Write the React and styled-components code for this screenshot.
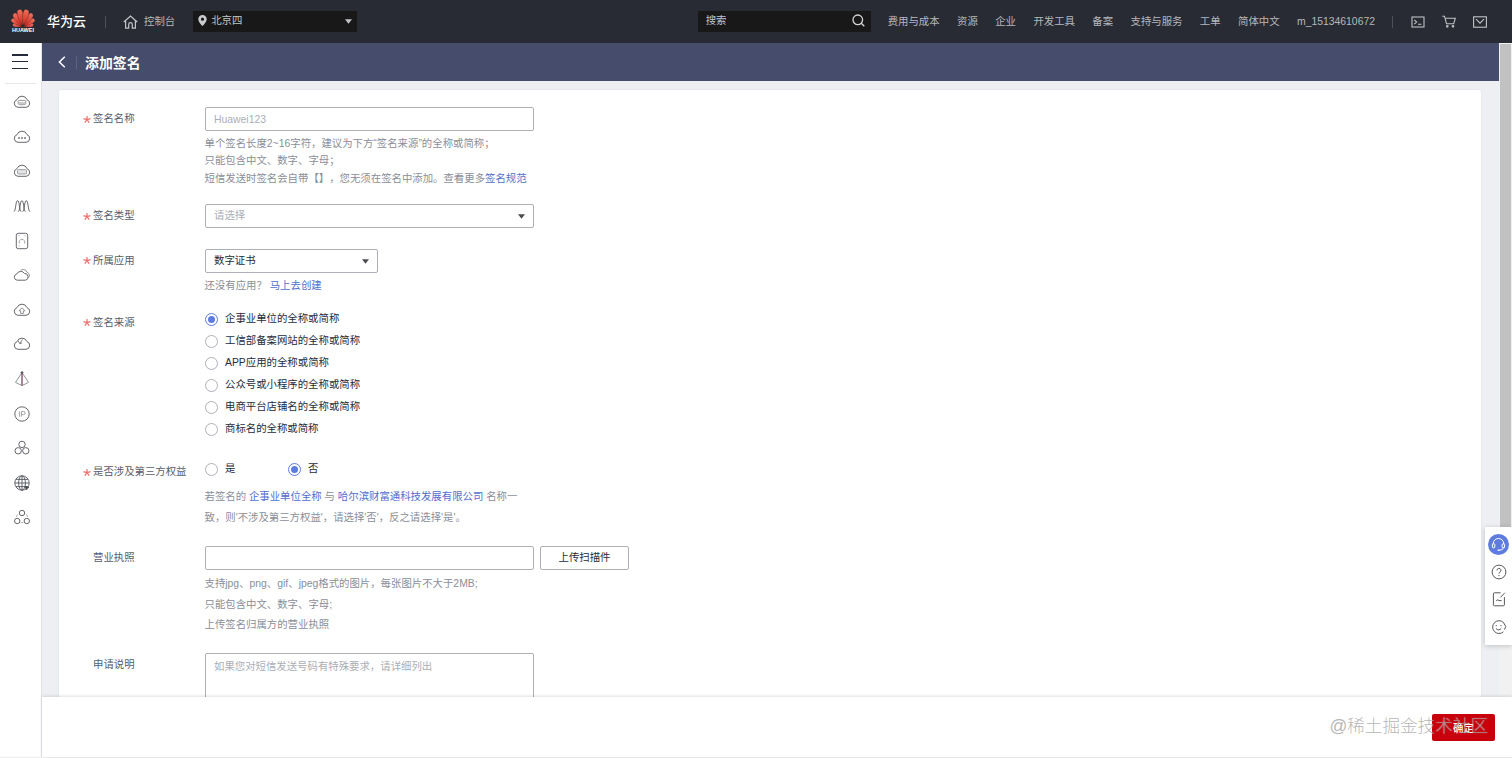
import { useState } from "react";
import styled, { createGlobalStyle } from "styled-components";

const NAV_ITEMS = [
  "费用与成本",
  "资源",
  "企业",
  "开发工具",
  "备案",
  "支持与服务",
  "工单",
  "简体中文",
  "m_15134610672",
];

const SOURCES = [
  "企事业单位的全称或简称",
  "工信部备案网站的全称或简称",
  "APP应用的全称或简称",
  "公众号或小程序的全称或简称",
  "电商平台店铺名的全称或简称",
  "商标名的全称或简称",
];

const CLOUD =
  "M5 14.3a3.9 3.9 0 0 1-1-7.6 5.3 5.3 0 0 1 10 0 3.9 3.9 0 0 1-1 7.6z";

const SIDE_ICONS = [
  <>
    <path d={CLOUD} />
    <rect x="5" y="7.4" width="8" height="2.6" rx="1.3" stroke="#888" />
    <path d="M5 10.4c0 1.8 8 1.8 8 0" stroke="#888" />
  </>,
  <>
    <path d={CLOUD} />
    <path d="M5.2 10h1.6M8.2 10h1.6M11.2 10h1.6" strokeWidth="1.5" />
  </>,
  <>
    <path d={CLOUD} />
    <rect x="4.5" y="7.6" width="9" height="4.4" rx="1" fill="#e3e4e6" stroke="#999" />
  </>,
  <path d="M1 14.6c1.8-.6 1.6-11 3.6-11s1.8 10.4 3.5 11M5.3 14.6c1.8-.6 1.6-11 3.6-11s1.8 10.4 3.5 11M9.7 14.6c1.8-.6 1.6-11 3.6-11s1.8 10.4 3.5 11" />,
  <>
    <rect x="3.3" y="1.3" width="11.4" height="15.4" rx="2" />
    <path d="M6.5 11.5a2.4 2.4 0 0 1 .3-3 2.6 2.6 0 0 1 4.4 0 2.4 2.4 0 0 1 .3 3" stroke="#999" />
    <path d="M5.5 3.8h1M11.5 3.8h1M5.5 14h1" stroke="#999" />
  </>,
  <>
    <path d="M4.2 14.2a3.1 3.1 0 0 1-.5-6.1 4.4 4.4 0 0 1 7.8-.6 3.4 3.4 0 0 1 1 6.7z" />
    <path d="M7.5 4.6a4 4 0 0 1 6.6 1.7 3.2 3.2 0 0 1 .8 5.8" stroke="#888" />
  </>,
  <>
    <path d={CLOUD} />
    <path d="M9 6.8l3 3h-1.6v2.6H7.6V9.8H6z" stroke="#888" />
  </>,
  <>
    <path d={CLOUD} />
    <path d="M9.5 4.5L6.8 8.6M5.2 5.8l1.5 2.9 2.4-.8" stroke="#777" />
  </>,
  <>
    <path d="M9 2.5L2.5 12.4 9 15.6l6.5-3.2z" stroke="#888" />
    <path d="M9 2.5v13" stroke="#7b4560" strokeWidth="1.3" />
    <circle cx="9" cy="2.6" r=".9" fill="#333" />
  </>,
  <>
    <circle cx="9" cy="9" r="7.2" />
    <path d="M6.4 6.4v5.2M8.4 11.6V6.5h2.2a1.5 1.5 0 0 1 0 3.1H8.6" stroke="#999" />
  </>,
  <>
    <circle cx="9" cy="5.4" r="3.2" />
    <circle cx="5.2" cy="11.8" r="3.2" />
    <circle cx="12.8" cy="11.8" r="3.2" />
  </>,
  <>
    <circle cx="9" cy="9" r="7.2" />
    <ellipse cx="9" cy="9" rx="3.4" ry="7.2" />
    <path d="M9 1.8v14.4M1.8 9h14.4M3 5.4h12M3 12.6h12" />
    <path d="M12 12l4 1.4-1.7.8-.8 1.8z" fill="#444" />
  </>,
  <>
    <circle cx="9" cy="5" r="2.7" />
    <circle cx="4.2" cy="13" r="2.7" />
    <circle cx="13.8" cy="13" r="2.7" />
    <path d="M4.6 6.4L3.2 9M13.4 6.4L14.8 9M7.6 14.6h2.8" stroke="#aaa" />
  </>,
];

const PETALS = [
  [-80, 0.66],
  [80, 0.66],
  [-58, 0.86],
  [58, 0.86],
  [-35, 1],
  [35, 1],
  [-12.5, 1.1],
  [12.5, 1.1],
];

function HuaweiMark() {
  return (
    <svg width="24" height="19" viewBox="0 0 24 19">
      <defs>
        <linearGradient id="petal" x1="0" y1="0" x2="0" y2="1">
          <stop offset="0" stopColor="#f0705c" />
          <stop offset="1" stopColor="#cf2418" />
        </linearGradient>
      </defs>
      {PETALS.map(([angle, size]) => (
        <path
          key={angle}
          d="M0-1.2C-1.8-5-3.3-10-2.4-14c.5-2.4 4.3-2.4 4.8 0C3.3-10 1.8-5 0-1.2z"
          fill="url(#petal)"
          stroke="#282b33"
          strokeWidth=".3"
          transform={`translate(12 18.5) rotate(${angle}) scale(${size})`}
        />
      ))}
    </svg>
  );
}

function StarIcon() {
  return (
    <svg width="8" height="7" viewBox="0 0 8 7" stroke="#f2706f" strokeWidth="1.2">
      <path d="M4 0v3.6M4 3.6L.5 2.6M4 3.6l3.5-1M4 3.6L1.8 6.7M4 3.6l2.2 3.1" />
    </svg>
  );
}

function FormRow({ label, required, labelOffset = 4, space, children }) {
  return (
    <Row $space={space}>
      <Star $offset={labelOffset}>{required && <StarIcon />}</Star>
      <Label $offset={labelOffset}>{label}</Label>
      <Field>{children}</Field>
    </Row>
  );
}

function RadioOption({ label, checked, onSelect }) {
  return (
    <Option onClick={onSelect}>
      <Radio $checked={checked} />
      <OptionText>{label}</OptionText>
    </Option>
  );
}

export default function App() {
  const [source, setSource] = useState(0);
  const [thirdParty, setThirdParty] = useState(false);

  return (
    <>
      <GlobalStyle />
      <Page>
        <TopBar>
          <Logo>
            <HuaweiMark />
            <LogoName>HUAWEI</LogoName>
          </Logo>
          <Brand>华为云</Brand>
          <Divider />
          <Console>
            <svg width="15" height="14" viewBox="0 0 15 14" fill="none" stroke="#c3c5ca" strokeWidth="1.2">
              <path d="M.8 7L7.5 1l6.7 6M2.6 5.8v7.4h3.1V9.4a1.8 1.8 0 0 1 3.6 0v3.8h3.1V5.8" />
            </svg>
            控制台
          </Console>
          <Region>
            <svg width="9" height="11" viewBox="0 0 9 11" fill="#c9cbcf" fillRule="evenodd">
              <path d="M4.5 0a4.2 4.2 0 0 1 4.2 4.2C8.7 7 4.5 11 4.5 11S.3 7 .3 4.2A4.2 4.2 0 0 1 4.5 0zm0 2.6a1.6 1.6 0 1 0 0 3.2 1.6 1.6 0 0 0 0-3.2z" />
            </svg>
            <RegionName>北京四</RegionName>
            <CaretIcon $color="#c3c5ca" viewBox="0 0 7 5">
              <path d="M0 .3h7L3.5 4.8z" />
            </CaretIcon>
          </Region>
          <Search>
            搜索
            <svg width="13" height="13" viewBox="0 0 13 13" fill="none" stroke="#d3d5d8" strokeWidth="1.3">
              <circle cx="5.8" cy="5.8" r="4.8" />
              <path d="M9.3 9.3l3 3" />
            </svg>
          </Search>
          <Nav>
            {NAV_ITEMS.map((item) => (
              <NavItem key={item}>{item}</NavItem>
            ))}
          </Nav>
          <Divider $right />
          <Tools>
            <svg width="14" height="12" viewBox="0 0 14 12">
              <rect x="1" y="1" width="12" height="10" />
              <path d="M3.3 3.8L5.6 6 3.3 8.2M7 8.2h3.4" />
            </svg>
            <svg width="14" height="13" viewBox="0 0 14 13">
              <path d="M.3 1.2h2.2l2 7.6h7.2l1.6-5.6H3.2" />
              <circle cx="5.3" cy="11.3" r=".8" />
              <circle cx="11" cy="11.3" r=".8" />
            </svg>
            <svg width="14" height="12" viewBox="0 0 14 12">
              <rect x=".6" y=".8" width="12.8" height="10.4" />
              <path d="M3 3.2l4 4 4-4" />
            </svg>
          </Tools>
        </TopBar>

        <Body>
          <Sidebar>
            <MenuButton>
              <MenuBar />
              <MenuBar />
              <MenuBar />
            </MenuButton>
            {SIDE_ICONS.map((icon, index) => (
              <SideItem key={index}>
                <svg width="18" height="18" viewBox="0 0 18 18">
                  {icon}
                </svg>
              </SideItem>
            ))}
          </Sidebar>

          <Main>
            <ScrollArea>
              <Content>
                <TitleBar>
                  <svg width="8" height="12" viewBox="0 0 8 12" fill="none" stroke="#fff" strokeWidth="1.5">
                    <path d="M6.8.8L1.4 6l5.4 5.2" />
                  </svg>
                  <TitleDivider />
                  <Title>添加签名</Title>
                </TitleBar>

                <Card>
                  <FormRow label="签名名称" required>
                    <Input placeholder="Huawei123" />
                    <Hints $line={17.3} $top={4}>
                      <p>单个签名长度2~16字符，建议为下方“签名来源”的全称或简称；</p>
                      <p>只能包含中文、数字、字母；</p>
                      <p>
                        短信发送时签名会自带【】，您无须在签名中添加。查看更多<Link>签名规范</Link>
                      </p>
                    </Hints>
                  </FormRow>

                  <FormRow label="签名类型" required space={17.1} labelOffset={4.5}>
                    <Select $placeholder>
                      请选择
                      <CaretIcon viewBox="0 0 7 5">
                        <path d="M0 .3h7L3.5 4.8z" />
                      </CaretIcon>
                    </Select>
                  </FormRow>

                  <FormRow label="所属应用" required space={21}>
                    <Select $width={173}>
                      数字证书
                      <CaretIcon viewBox="0 0 7 5">
                        <path d="M0 .3h7L3.5 4.8z" />
                      </CaretIcon>
                    </Select>
                    <Hints $line={17.3} $top={4}>
                      <p>
                        还没有应用？ <Link>马上去创建</Link>
                      </p>
                    </Hints>
                  </FormRow>

                  <FormRow label="签名来源" required space={13.7} labelOffset={7}>
                    <Options>
                      {SOURCES.map((item, index) => (
                        <RadioOption
                          key={item}
                          label={item}
                          checked={source === index}
                          onSelect={() => setSource(index)}
                        />
                      ))}
                    </Options>
                  </FormRow>

                  <FormRow label="是否涉及第三方权益" required space={18} labelOffset={6.5}>
                    <InlineOptions>
                      <RadioOption label="是" checked={thirdParty} onSelect={() => setThirdParty(true)} />
                      <RadioOption label="否" checked={!thirdParty} onSelect={() => setThirdParty(false)} />
                    </InlineOptions>
                    <Hints $line={20.8} $top={6.8}>
                      <p>
                        若签名的 <Link>企事业单位全称</Link> 与 <Link>哈尔滨财富通科技发展有限公司</Link> 名称一
                      </p>
                      <p>致，则'不涉及第三方权益'，请选择'否'，反之请选择'是'。</p>
                    </Hints>
                  </FormRow>

                  <FormRow label="营业执照" space={17.6}>
                    <Upload>
                      <Input />
                      <UploadButton>上传扫描件</UploadButton>
                    </Upload>
                    <Hints $line={20.9} $top={3.7}>
                      <p>支持jpg、png、gif、jpeg格式的图片，每张图片不大于2MB;</p>
                      <p>只能包含中文、数字、字母;</p>
                      <p>上传签名归属方的营业执照</p>
                    </Hints>
                  </FormRow>

                  <FormRow label="申请说明" space={16.7}>
                    <TextArea placeholder="如果您对短信发送号码有特殊要求，请详细列出" />
                  </FormRow>
                </Card>
              </Content>
              <Scrollbar>
                <Thumb />
              </Scrollbar>
            </ScrollArea>

            <Footer>
              <Submit>确定</Submit>
              <Watermark>@稀土掘金技术社区</Watermark>
            </Footer>
          </Main>
        </Body>

        <Assist>
          <Support>
            <svg width="15" height="15" viewBox="0 0 15 15" fill="none" stroke="#fff">
              <path d="M2.2 7.4V6.8a5.3 5.3 0 0 1 10.6 0v.6M12.6 10.6c-.6 1.6-2 2.4-3.8 2.5" />
              <rect x="1.4" y="6.8" width="2.4" height="4" rx=".8" />
              <rect x="11.2" y="6.8" width="2.4" height="4" rx=".8" />
              <path d="M6.6 13.2h2.2" strokeWidth="1.4" />
            </svg>
          </Support>
          <svg width="16" height="16" viewBox="0 0 16 16">
            <circle cx="8" cy="8" r="6.9" />
            <path d="M6 6.4a2 2 0 1 1 3 1.7c-.7.4-1 .7-1 1.5M8 11v1.1" />
          </svg>
          <svg width="16" height="16" viewBox="0 0 16 16">
            <path d="M9.6 1.8H3.4a1 1 0 0 0-1 1v11a1 1 0 0 0 1 1h9a1 1 0 0 0 1-1V6.2M13.8 1.8L9.4 6.4M5.2 9.6l1.6-.8 1.2.8h2.6" />
          </svg>
          <svg width="16" height="16" viewBox="0 0 16 16">
            <path d="M12.4 3.4A6.4 6.4 0 1 0 12.4 12.8M12.4 3.4L14.8 7.6l-1.4 3" />
            <path d="M5 9.4c1.2 2 4 2 5.2 0M5.2 6v1.2M10 6v1.2" />
          </svg>
        </Assist>
      </Page>
    </>
  );
}

const GlobalStyle = createGlobalStyle`
  * {
    box-sizing: border-box;
  }

  body {
    margin: 0;
    overflow: hidden;
  }

  body, input, textarea, button {
    font-family: "Liberation Sans", "Noto Sans CJK SC", sans-serif;
    font-size: 10.4px;
    text-spacing-trim: space-all;
  }

  svg {
    display: block;
    flex-shrink: 0;
  }

  p {
    margin: 0;
  }
`;

const Page = styled.div`
  position: relative;
  display: flex;
  flex-direction: column;
  width: 1512px;
  height: 758px;
  background: #fff;
  color: #252b3a;
`;

const TopBar = styled.header`
  display: flex;
  align-items: center;
  height: 43px;
  padding: 0 25px 0 11px;
  background: #282b33;
  color: #b6b8bd;
  white-space: nowrap;
`;

const Logo = styled.div`
  display: flex;
  flex-direction: column;
  align-items: center;
  width: 24px;
  margin-top: -2px;
`;

const LogoName = styled.span`
  color: #fff;
  font-size: 5.5px;
  font-weight: bold;
  line-height: 6px;
`;

const Brand = styled.span`
  margin-left: 12px;
  color: #fff;
  font-size: 13px;
  font-weight: 500;
  line-height: 20px;
`;

const Divider = styled.i`
  width: 1px;
  height: 12px;
  margin: ${({ $right }) => ($right ? "0 18px 0 17px" : "0 17px 0 19px")};
  background: #4c4f57;
`;

const Console = styled.div`
  display: flex;
  align-items: center;
  gap: 6px;
  line-height: 16px;
`;

const DarkBox = styled.div`
  display: flex;
  align-items: center;
  height: 21px;
  background: #181818;
  color: #c3c5ca;
  line-height: 16px;
`;

const Region = styled(DarkBox)`
  width: 164px;
  margin-left: 18px;
  padding: 0 5px 2px 5px;
`;

const RegionName = styled.span`
  flex: 1;
  margin-left: 4px;
`;

const Search = styled(DarkBox)`
  justify-content: space-between;
  width: 173px;
  margin-left: auto;
  padding: 0 6px 2px 8px;
`;

const Nav = styled.nav`
  display: flex;
  gap: 17.4px;
  margin-left: 17px;
`;

const NavItem = styled.span`
  line-height: 16px;
  padding-top: 1px;
`;

const Tools = styled.div`
  display: flex;
  align-items: center;
  gap: 17px;

  svg {
    fill: none;
    stroke: #c0c2c7;
    stroke-width: 1.1;
  }
`;

const CaretIcon = styled.svg`
  width: 7px;
  height: 5px;
  margin-top: 1px;
  fill: ${({ $color }) => $color || "#4a4c52"};
`;

const Body = styled.div`
  display: flex;
  flex: 1;
  min-height: 0;
  border-bottom: 1px solid #ececee;
`;

const Sidebar = styled.aside`
  width: 42px;
  border-right: 1px solid #e2e3e8;
  background: #fff;
`;

const MenuButton = styled.div`
  display: flex;
  flex-direction: column;
  gap: 5.3px;
  height: 41px;
  margin: 0 5px 1px 5px;
  padding: 11px 8px 0 7px;
  border-bottom: 1px solid #e6e6e9;
`;

const MenuBar = styled.i`
  height: 1.5px;
  background: #252b3a;
`;

const SideItem = styled.div`
  display: flex;
  align-items: center;
  height: 34.6px;
  padding-left: 13px;

  svg {
    fill: none;
    stroke: #55575d;
    stroke-width: 0.9;
  }
`;

const Main = styled.main`
  display: flex;
  flex: 1;
  flex-direction: column;
  min-width: 0;
`;

const ScrollArea = styled.div`
  display: flex;
  height: 654px;
  overflow: hidden;
`;

const Content = styled.div`
  flex: 1;
  overflow: hidden;
  background: #edeff2;
`;

const Scrollbar = styled.div`
  width: 13px;
  padding: 1px 1px 0;
  background: #f1f1f1;
`;

const Thumb = styled.div`
  height: 500px;
  background: #c1c1c1;
`;

const TitleBar = styled.div`
  display: flex;
  align-items: center;
  height: 38px;
  padding-left: 16px;
  background: #464d6c;
`;

const TitleDivider = styled.i`
  width: 1px;
  height: 13px;
  margin: 0 8px 0 10px;
  background: #5c6382;
`;

const Title = styled.h1`
  margin: 1px 0 0;
  color: #fff;
  font-size: 13.9px;
  font-weight: bold;
  line-height: 20px;
`;

const Card = styled.section`
  height: 640px;
  margin: 9px 18px 0 17px;
  padding: 17px 24px 0;
  border-radius: 2px;
  background: #fff;
  box-shadow: 0 0 2px rgba(60, 70, 100, 0.12);
`;

const Row = styled.div`
  display: flex;
  align-items: flex-start;
  margin-top: ${({ $space = 0 }) => $space}px;
`;

const Star = styled.span`
  width: 10px;
  padding-top: ${({ $offset }) => $offset + 4.5}px;
`;

const Label = styled.label`
  width: 112px;
  padding-top: ${({ $offset }) => $offset}px;
  color: #575d6c;
  line-height: 16px;
`;

const Field = styled.div`
  flex: 1;
`;

const Input = styled.input`
  display: block;
  width: 329px;
  height: 24px;
  padding: 0 8px;
  border: 1px solid #adb0b8;
  border-radius: 2px;
  background: #fff;
  color: #252b3a;
  outline: none;

  &::placeholder {
    color: #abaeb5;
  }
`;

const Select = styled.div`
  display: flex;
  align-items: center;
  justify-content: space-between;
  width: ${({ $width = 329 }) => $width}px;
  height: 24px;
  padding: 0 8px;
  border: 1px solid #adb0b8;
  border-radius: 2px;
  background: #fff;
  color: ${({ $placeholder }) => ($placeholder ? "#abaeb5" : "#252b3a")};
  line-height: 16px;
`;

const TextArea = styled.textarea`
  display: block;
  width: 329px;
  height: 80px;
  padding: 5px 8px;
  border: 1px solid #adb0b8;
  border-radius: 2px;
  line-height: 16px;
  outline: none;
  resize: none;

  &::placeholder {
    color: #abaeb5;
  }
`;

const Hints = styled.div`
  margin-left: -0.5px;
  padding-top: ${({ $top }) => $top}px;
  color: #8a8e99;
  line-height: ${({ $line }) => $line}px;
  white-space: nowrap;
`;

const Link = styled.a`
  color: #526ecc;
  cursor: pointer;
`;

const Options = styled.div`
  display: flex;
  flex-direction: column;
`;

const InlineOptions = styled.div`
  display: grid;
  grid-template-columns: 83px auto;
`;

const Option = styled.div`
  display: flex;
  align-items: center;
  gap: 7px;
  height: 22px;
  cursor: pointer;
`;

const OptionText = styled.span`
  line-height: 16px;
`;

const Radio = styled.i`
  display: grid;
  place-items: center;
  width: 13px;
  height: 13px;
  margin-top: 1px;
  border: 1px solid ${({ $checked }) => ($checked ? "#5e7ce0" : "#adb0b8")};
  border-radius: 50%;

  &::after {
    content: "";
    width: 7px;
    height: 7px;
    border-radius: 50%;
    background: ${({ $checked }) => ($checked ? "#5e7ce0" : "transparent")};
  }
`;

const Upload = styled.div`
  display: flex;
  gap: 6px;
`;

const UploadButton = styled.button`
  width: 89px;
  height: 24px;
  padding: 0 0 2px;
  border: 1px solid #adb0b8;
  border-radius: 2px;
  background: #fff;
  color: #252b3a;
`;

const Footer = styled.footer`
  position: relative;
  display: flex;
  flex: 1;
  align-items: flex-start;
  justify-content: flex-end;
  padding: 17px 17px 0 0;
  background: #fff;
  box-shadow: 0 -1px 3px rgba(0, 0, 0, 0.12);
`;

const Submit = styled.button`
  width: 63px;
  height: 27px;
  padding: 0;
  border: 0;
  border-radius: 2px;
  background: #c7000b;
  color: #fff;
  font-weight: 500;
`;

const Watermark = styled.span`
  position: absolute;
  top: 16px;
  right: 24px;
  color: rgba(140, 140, 140, 0.65);
  font-size: 17.6px;
  font-weight: 300;
  line-height: 26px;
  text-shadow: 0 0 1px rgba(255, 255, 255, 0.6);
  white-space: nowrap;
  pointer-events: none;
`;

const Assist = styled.div`
  position: absolute;
  top: 527px;
  right: 0;
  display: flex;
  flex-direction: column;
  align-items: center;
  gap: 11.5px;
  width: 27px;
  height: 118px;
  padding-top: 7px;
  background: #fff;
  box-shadow: 0 1px 5px rgba(0, 0, 0, 0.2);

  > svg {
    fill: none;
    stroke: #55575d;
    stroke-width: 1;
  }
`;

const Support = styled.div`
  display: grid;
  place-items: center;
  width: 21px;
  height: 21px;
  margin-bottom: -3px;
  border-radius: 50%;
  background: #5e7ce0;
`;
